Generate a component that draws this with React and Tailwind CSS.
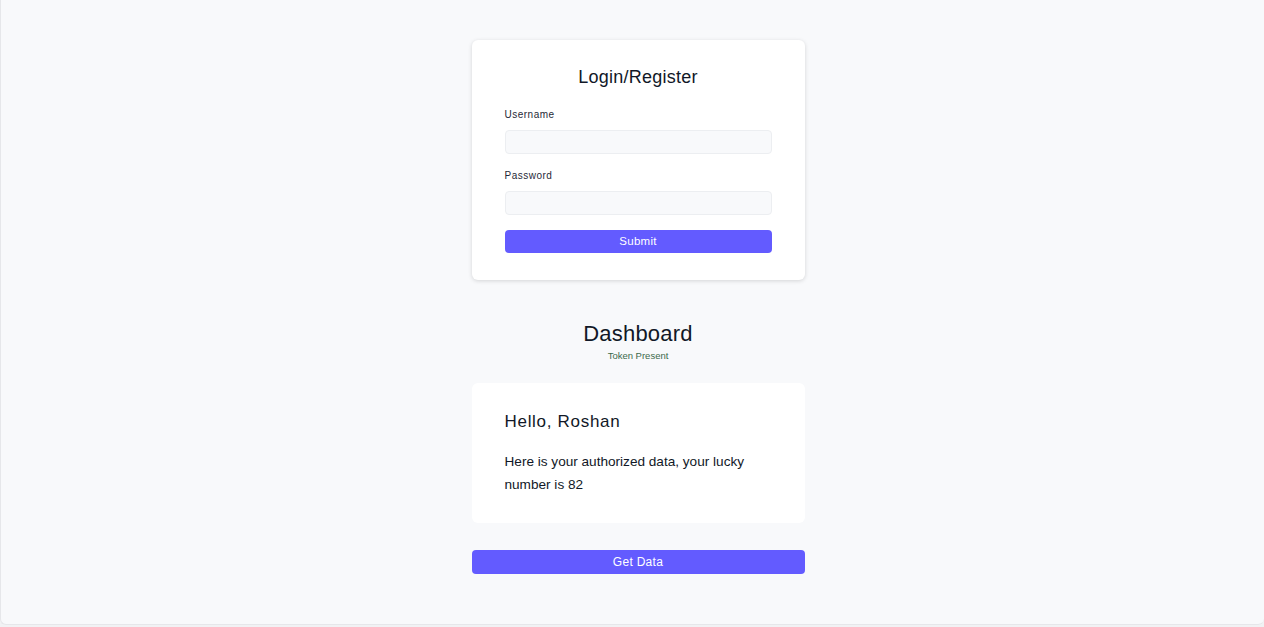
import React from 'react';

const App = () => {
  return (
    <div className="min-h-[627px] bg-[#f1f2f4] font-['Liberation_Sans',Arial,sans-serif] text-[#1f2937]">
      <div className="h-[625px] bg-[#f8f9fb] rounded-b-md border-l border-b border-[#e6e7ea] flex flex-col items-center pt-10 pl-[11px]">
        <div className="w-[333px] bg-white rounded-md shadow-[0_1px_4px_rgba(0,0,0,0.15)] px-[33px] pt-[27px] pb-[27px]">
          <h2 className="text-center text-[18px] tracking-[0.25px] text-[#111827] leading-5">Login/Register</h2>

          <label className="block mt-[20px] text-[10px] tracking-wider text-[#1f2937]">Username</label>
          <input type="text" className="mt-[8px] block w-full h-6 bg-[#f8f9fb] border border-[#eceef1] rounded-sm outline-none" />

          <label className="block mt-[14px] text-[10px] tracking-wider text-[#1f2937]">Password</label>
          <input type="password" className="mt-[8px] block w-full h-6 bg-[#f8f9fb] border border-[#eceef1] rounded-sm outline-none" />

          <button className="mt-[15px] w-full h-[23px] bg-[#635bff] text-white text-[11.5px] tracking-wide rounded-sm">
            Submit
          </button>
        </div>

        <h2 className="mt-[42px] text-[22px] tracking-[0.2px] text-[#111827] leading-6">Dashboard</h2>
        <p className="mt-[4px] text-[9.5px] text-[#3d6a4c] leading-3">Token Present</p>

        <div className="mt-[21px] w-[333px] h-[140px] bg-white rounded-md px-[33px] pt-[29px]">
          <h3 className="text-[17px] tracking-[0.7px] text-[#111827] leading-5">Hello, Roshan</h3>
          <p className="mt-[18px] text-[13.6px] leading-[23px] text-[#111827]">
            Here is your authorized data, your lucky number is 82
          </p>
        </div>

        <button className="mt-[27px] w-[333px] h-6 bg-[#635bff] text-white text-[12px] tracking-wide rounded-sm">
          Get Data
        </button>
      </div>
    </div>
  );
};

export default App;
